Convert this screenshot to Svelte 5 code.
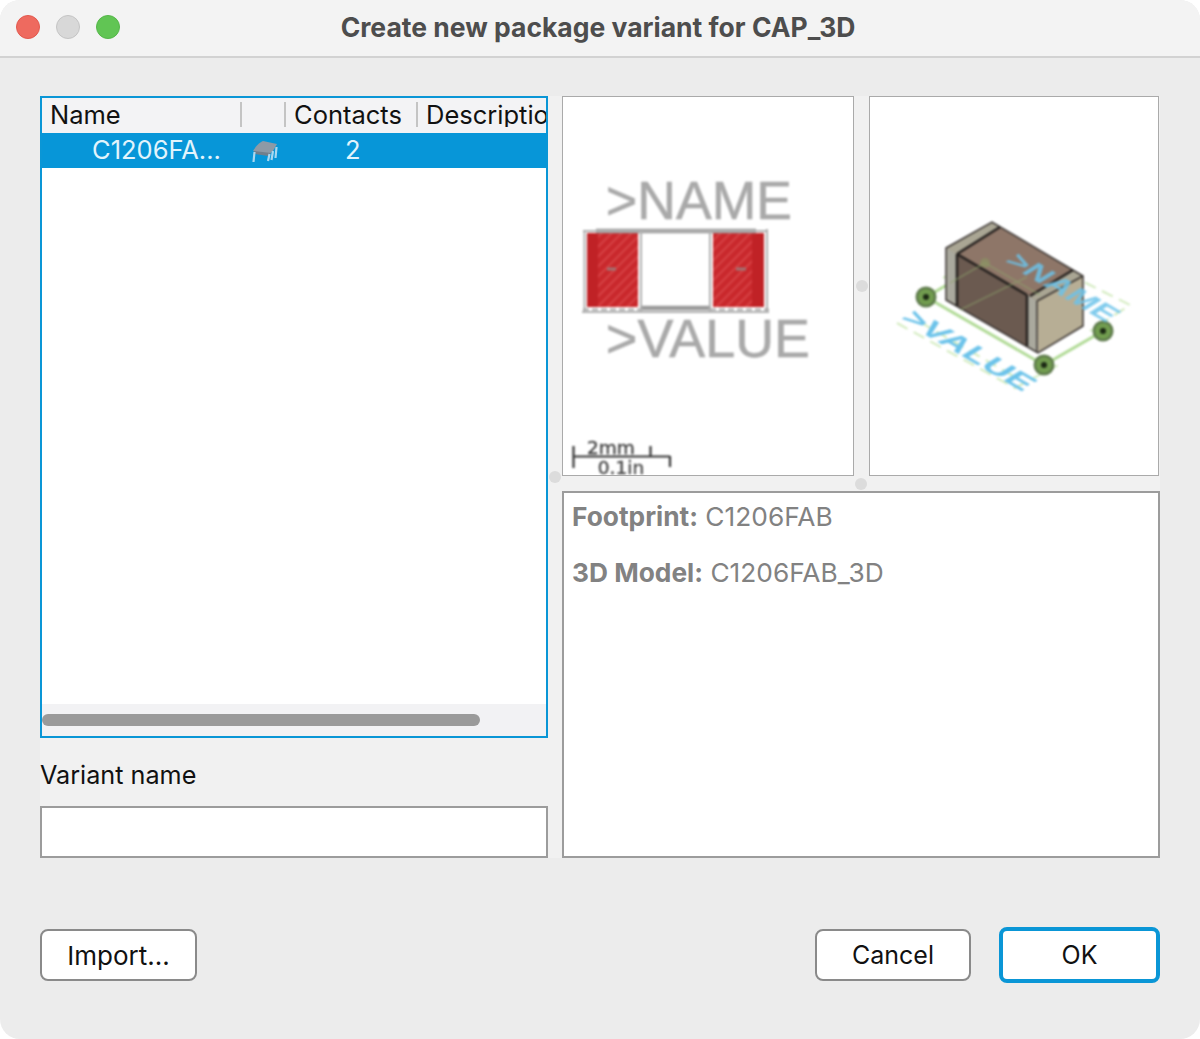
<script>
  const columns = ['Name', '', 'Contacts', 'Description'];
</script>

<div class="window">
  <header class="titlebar">
    <div class="lights">
      <span class="light red"></span>
      <span class="light grey"></span>
      <span class="light green"></span>
    </div>
    <h1>Create new package variant for CAP_3D</h1>
  </header>

  <main class="content">
    <section class="panes">
      <div class="left">
        <div class="table">
          <div class="thead">
            {#each columns as c}
              <div class="th">{c}</div>
            {/each}
          </div>
          <div class="row">
            <div class="td name">C1206FA...</div>
            <div class="td icon">
              <svg width="26" height="24" viewBox="0 0 26 24">
                <path d="M1 12 C3 8 8 3 11 2 L25 5 L21 12 L16 16 L4 13 Z" fill="#8e9aa6"/>
                <path d="M2 12 L19 14 L21 12 L16 17 L3 15 Z" fill="#727f8c"/>
                <path d="M2.500 13 L1.500 23 M17.500 15 L16 22 M21 12 L19.500 21 M24.500 8 L23.500 19" stroke="#a9d8f0" stroke-width="2.200" fill="none"/>
              </svg>
            </div>
            <div class="td count">2</div>
            <div class="td"></div>
          </div>
          <div class="tbody"></div>
          <div class="hscroll"><div class="thumb"></div></div>
        </div>
        <label class="variant" for="variant">Variant name</label>
        <input id="variant" class="field" type="text" />
      </div>

      <div class="gutter"><span class="dot main-dot"></span></div>

      <div class="right">
        <div class="previews">
          <div class="preview first">
            <svg class="art" viewBox="562 96 290 378" width="290" height="378">
              <defs>
                <pattern id="hatch" width="7" height="7" patternUnits="userSpaceOnUse" patternTransform="rotate(45)">
                  <rect width="7" height="7" fill="#c9282c"/>
                  <rect width="2" height="7" fill="#d64245"/>
                </pattern>
              </defs>
              <text x="605" y="218" class="pkg" textLength="186" lengthAdjust="spacingAndGlyphs">&gt;NAME</text>
              <text x="605" y="356" class="pkg" textLength="204" lengthAdjust="spacingAndGlyphs">&gt;VALUE</text>
              <rect x="586" y="232" width="51" height="74" fill="url(#hatch)"/>
              <rect x="712" y="232" width="51" height="74" fill="url(#hatch)"/>
              <rect x="586" y="232" width="11" height="74" fill="#c02226"/>
              <rect x="751" y="232" width="12" height="74" fill="#c02226"/>
              <path d="M595 230H755M640 307H709" stroke="#9a9a9a" stroke-width="4.500" fill="none"/>
              <path d="M583.500 229V311M640 229V310M709 229V310M766 228V311M582 230H767M581 311H768" stroke="#b0b0b0" stroke-width="2" fill="none"/>
              <path d="M582 308.500H640M709 308.500H768" stroke="#a8a8a8" stroke-width="2" stroke-dasharray="6 3" fill="none"/>
              <path d="M606 268H615M735 268H745" stroke="#a07474" stroke-width="3"/>
              <path d="M572.500 445V467M572 455.500H669M649.500 445V455M669 455V466" stroke="#333" stroke-width="2.200" fill="none"/>
              <text x="610" y="453" class="scale" text-anchor="middle">2mm</text>
              <text x="620" y="473" class="scale" text-anchor="middle">0.1in</text>
            </svg>
          </div>
          <div class="vsplit"><span class="dot"></span></div>
          <div class="preview second">
            <svg class="art" viewBox="870 97 288 378" width="288" height="378">
              <g fill="none" stroke="#d3ebbf" stroke-width="2" stroke-dasharray="12 7">
                <path d="M897 323L1015 388L1060 364M943 278L972 262M1000 240L1130 305L1090 331M920 322L1020 380"/>
              </g>
              <path d="M926 297L1044 365L1103 331M926 297L985 263" fill="none" stroke="#b0da95" stroke-width="3"/>
              <circle cx="926" cy="297" r="10.500" fill="#5e7a4c"/><circle cx="926" cy="297" r="8" fill="#719c4f"/><circle cx="926" cy="297" r="3" fill="#1c2a14"/>
              <circle cx="1103" cy="331" r="10.500" fill="#5e7a4c"/><circle cx="1103" cy="331" r="8" fill="#719c4f"/><circle cx="1103" cy="331" r="3" fill="#1c2a14"/>
              <path d="M946 248L992 222L1083 276L1037 301Z" fill="#8e7668"/>
              <path d="M946 248L1037 301V353L946 300Z" fill="#6b5a50"/>
              <path d="M1037 301L1083 276V326L1038 353Z" fill="#b7ae95"/>
              <path d="M946 248L958 254V306L946 300Z" fill="#aaa99e"/>
              <path d="M1028 295L1037 301V353L1028 347Z" fill="#aaa99e"/>
              <path d="M946 248L992 222L1000 227L957 254Z" fill="#aaa694"/>
              <path d="M1030 296L1073 270L1083 276L1037 301Z" fill="#aaa694"/>
              <path d="M946 248L992 222L1083 276V326L1038 353L946 300Z M1037 301V353 M1037 301L1083 276" fill="none" stroke="#3a3532" stroke-width="1.500"/>
              <path d="M957 254V306M1027 295V346M957 254L1000 227M1030 296L1073 270M957 254L1027 295" fill="none" stroke="#25211f" stroke-width="2.500"/>
              <path d="M985 263L1040 295M950 283L985 263M960 310L1027 277" fill="none" stroke="#8fa86e" stroke-width="1.500" opacity=".5"/>
              <circle cx="985" cy="263" r="5" fill="#8a9b62" opacity=".5"/>
              <circle cx="1044" cy="365" r="10.500" fill="#5e7a4c"/><circle cx="1044" cy="365" r="8" fill="#719c4f"/><circle cx="1044" cy="365" r="3" fill="#1c2a14"/>
              <text class="iso" transform="matrix(0.85 0.5 -0.8 0.5 899 319)" textLength="146" lengthAdjust="spacingAndGlyphs">&gt;VALUE</text>
              <text class="iso name" transform="matrix(0.85 0.5 -0.8 0.5 1003 262)" textLength="122" lengthAdjust="spacingAndGlyphs">&gt;NAME</text>
            </svg>
          </div>
        </div>
        <div class="hsplit"><span class="dot"></span></div>
        <div class="info">
          <p><b>Footprint:</b> C1206FAB</p>
          <p><b>3D Model:</b> C1206FAB_3D</p>
        </div>
      </div>
    </section>

    <footer class="actions">
      <button class="btn import">Import...</button>
      <div class="spacer"></div>
      <button class="btn cancel">Cancel</button>
      <button class="btn ok">OK</button>
    </footer>
  </main>
</div>

<style>
  :global(body) {
    margin: 0;
    background: #fff;
  }
  .window {
    width: 1200px;
    height: 1039px;
    box-sizing: border-box;
    background: #ececec;
    border-radius: 20px;
    overflow: hidden;
    font-family: Inter, "Liberation Sans", sans-serif;
    color: #111;
    display: flex;
    flex-direction: column;
  }
  .titlebar {
    height: 58px;
    flex: none;
    box-sizing: border-box;
    background: #f3f3f3;
    border-bottom: 2px solid #d2d2d2;
    display: flex;
    align-items: center;
    position: relative;
  }
  .lights {
    display: flex;
    gap: 16px;
    padding-left: 16px;
    margin-top: -2px;
  }
  .light {
    width: 24px;
    height: 24px;
    border-radius: 50%;
    box-sizing: border-box;
  }
  .red { background: #ee6a5f; border: 1px solid #e2594e; }
  .grey { background: #d8d8d8; border: 1px solid #c4c4c4; }
  .green { background: #61c554; border: 1px solid #55b649; }
  h1 {
    position: absolute;
    left: 0;
    right: 4px;
    top: 12px;
    margin: 0;
    text-align: center;
    font-size: 26.500px;
    line-height: 30px;
    font-weight: 650;
    color: #4d4d4d;
  }
  .content {
    flex: 1;
    padding: 38px 40px 0;
    display: flex;
    flex-direction: column;
  }
  .panes {
    display: flex;
    height: 762px;
    background: #f1f1f1;
  }
  .left {
    width: 508px;
    flex: none;
    display: flex;
    flex-direction: column;
  }
  .table {
    height: 642px;
    box-sizing: border-box;
    border: 2px solid #0a96d6;
    display: flex;
    flex-direction: column;
    background: #fff;
    font-size: 25.500px;
  }
  .thead, .row {
    display: grid;
    grid-template-columns: 200px 44px 132px 1fr;
  }
  .thead {
    height: 35px;
    background: #f3f3f5;
    overflow: hidden;
    align-items: start;
  }
  .th {
    height: 25px;
    line-height: 25px;
    margin-top: 4px;
    padding-left: 8px;
    border-right: 2px solid #c4c4c4;
    box-sizing: border-box;
    white-space: nowrap;
  }
  .th:last-child { border-right: 0; overflow: hidden; }
  .row {
    height: 35px;
    background: #0796d8;
    color: #e2f4fc;
    line-height: 33px;
  }
  .td { min-width: 0; }
  .name { padding-left: 50px; }
  .icon { display: flex; align-items: center; padding-left: 10px; }
  .count { padding-left: 59px; }
  .tbody { flex: 1; background: #fff; }
  .hscroll {
    height: 32px;
    background: #f2f2f4;
    display: flex;
    align-items: center;
  }
  .thumb {
    width: 438px;
    height: 12px;
    border-radius: 6px;
    background: #9a9a9a;
  }
  .variant {
    height: 68px;
    font-size: 25.200px;
    line-height: 75px;
    display: block;
  }
  .field {
    height: 52px;
    box-sizing: border-box;
    border: 2px solid #9c9c9c;
    background: #fff;
    width: 100%;
    margin: 0;
    padding: 0;
    border-radius: 0;
    outline: 0;
  }
  .gutter {
    width: 14px;
    flex: none;
    position: relative;
  }
  .main-dot {
    position: absolute;
    left: 1px;
    top: 375px;
  }
  .dot {
    width: 12px;
    height: 12px;
    border-radius: 50%;
    background: #dcdcdc;
    display: block;
  }
  .right {
    flex: 1;
    min-width: 0;
    display: flex;
    flex-direction: column;
  }
  .previews {
    display: flex;
    height: 380px;
  }
  .preview {
    background: #fff;
    border: 1px solid #aaa;
    overflow: hidden;
    box-sizing: border-box;
    height: 380px;
    flex: none;
  }
  .first { width: 292px; }
  .second { width: 290px; }
  .art {
    display: block;
    filter: blur(0.8px);
  }
  .pkg {
    font-family: "Liberation Sans", sans-serif;
    font-size: 53px;
    fill: #a9a9a9;
    stroke: #a9a9a9;
    stroke-width: 0.600px;
  }
  .scale {
    font-family: "DejaVu Sans", sans-serif;
    font-size: 18.500px;
    fill: #444;
    stroke: #444;
    stroke-width: 0.400px;
  }
  .iso {
    font-family: "Liberation Sans", sans-serif;
    font-weight: 700;
    font-size: 30px;
    fill: #6cc3ea;
  }
  .iso.name { opacity: .85; }
  .vsplit {
    width: 15px;
    flex: none;
    display: flex;
    justify-content: center;
    padding-top: 184px;
    box-sizing: border-box;
  }
  .hsplit {
    height: 15px;
    flex: none;
    display: flex;
    justify-content: center;
    align-items: center;
  }
  .info {
    flex: 1;
    box-sizing: border-box;
    background: #fff;
    border: 2px solid #9c9c9c;
    padding: 9px 8px;
    font-size: 26.300px;
    color: #828282;
  }
  .info p {
    margin: 0 0 26px;
    line-height: 30px;
  }
  .info b { font-weight: 700; }
  .actions {
    display: flex;
    align-items: center;
    margin-top: 69px;
    height: 56px;
    gap: 28px;
  }
  .spacer { flex: 1; }
  .btn {
    font-family: inherit;
    font-size: 25px;
    color: #111;
    background: #fff;
    box-sizing: border-box;
    border: 2px solid #8a8a8a;
    border-radius: 8px;
    width: 156px;
    height: 52px;
    padding: 0;
  }
  .import { width: 157px; font-size: 26px; }
  .ok {
    width: 161px;
    height: 56px;
    border: 4px solid #0a96d6;
  }
</style>
